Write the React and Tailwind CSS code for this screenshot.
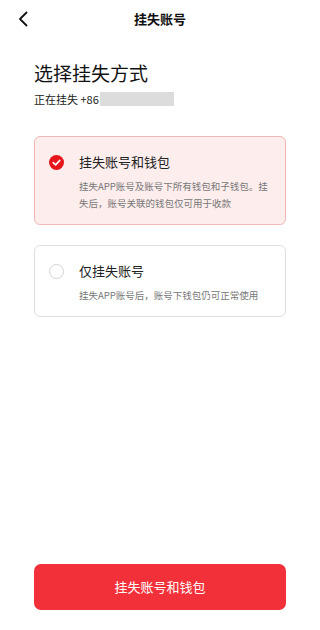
const font = { fontFamily: '"Noto Sans CJK SC", "Noto Sans", sans-serif' };

const Option = ({ checked, title, desc, className }) => (
  <div
    className={`flex rounded-[6px] border pl-[14px] pr-[14px] ${className} ${
      checked ? "border-[#f2b8b8] bg-[#fdeded]" : "border-[#dedede] bg-white"
    }`}>
    {/* radio */}
    <div className="mt-[18px] w-[30px] shrink-0">
      {checked ? (
        <svg width="15" height="15" viewBox="0 0 15 15">
          <circle cx="7.5" cy="7.5" r="7.5" fill="#e8141c" />
          <path d="M4.2 7.6 L6.6 9.9 L10.8 5.4" fill="none" stroke="#fff" strokeWidth="1.6" strokeLinecap="round" strokeLinejoin="round" />
        </svg>
      ) : (
        <div className="h-[15px] w-[15px] rounded-full border border-[#d4d4d4]" />
      )}
    </div>
    <div className="flex-1">
      <div className="mt-[14px] text-[13px] leading-[22px] text-[#222]">{title}</div>
      <div className="mt-[5px] text-[9.5px] leading-[17px] text-[#777]">{desc}</div>
    </div>
  </div>
);

export default function App() {
  return (
    <div className="flex h-[630px] w-[320px] flex-col bg-white" style={font}>
      {/* header */}
      <div className="relative flex h-[38px] items-center justify-center">
        <svg className="absolute left-[17px] top-[11px]" width="12" height="16" viewBox="0 0 12 16">
          <path d="M9.5 1.5 L3 8 L9.5 14.5" fill="none" stroke="#111" strokeWidth="1.8" strokeLinecap="round" strokeLinejoin="round" />
        </svg>
        <span className="text-[13px] font-bold text-[#111]">挂失账号</span>
      </div>

      <div className="px-[34px]">
        <div className="mt-[21px] text-[19px] leading-[28px] text-[#111]">选择挂失方式</div>
        <div className="mt-[4px] flex items-center text-[11px] leading-[16px] text-[#222]">
          <span>正在挂失 +86</span>
          <span className="ml-[1px] h-[14px] w-[74px] bg-[#dcdcdc]" />
        </div>

        <Option
          checked
          className="mt-[29px] h-[89px]"
          title="挂失账号和钱包"
          desc="挂失APP账号及账号下所有钱包和子钱包。挂失后，账号关联的钱包仅可用于收款"
        />
        <Option
          className="mt-[20px] h-[72px]"
          title="仅挂失账号"
          desc="挂失APP账号后，账号下钱包仍可正常使用"
        />
      </div>

      <div className="mt-auto mb-[20px] px-[34px]">
        <button className="flex h-[46px] w-full items-center justify-center rounded-[7px] bg-[#f2303a] text-[13px] text-white">
          挂失账号和钱包
        </button>
      </div>
    </div>
  );
}
